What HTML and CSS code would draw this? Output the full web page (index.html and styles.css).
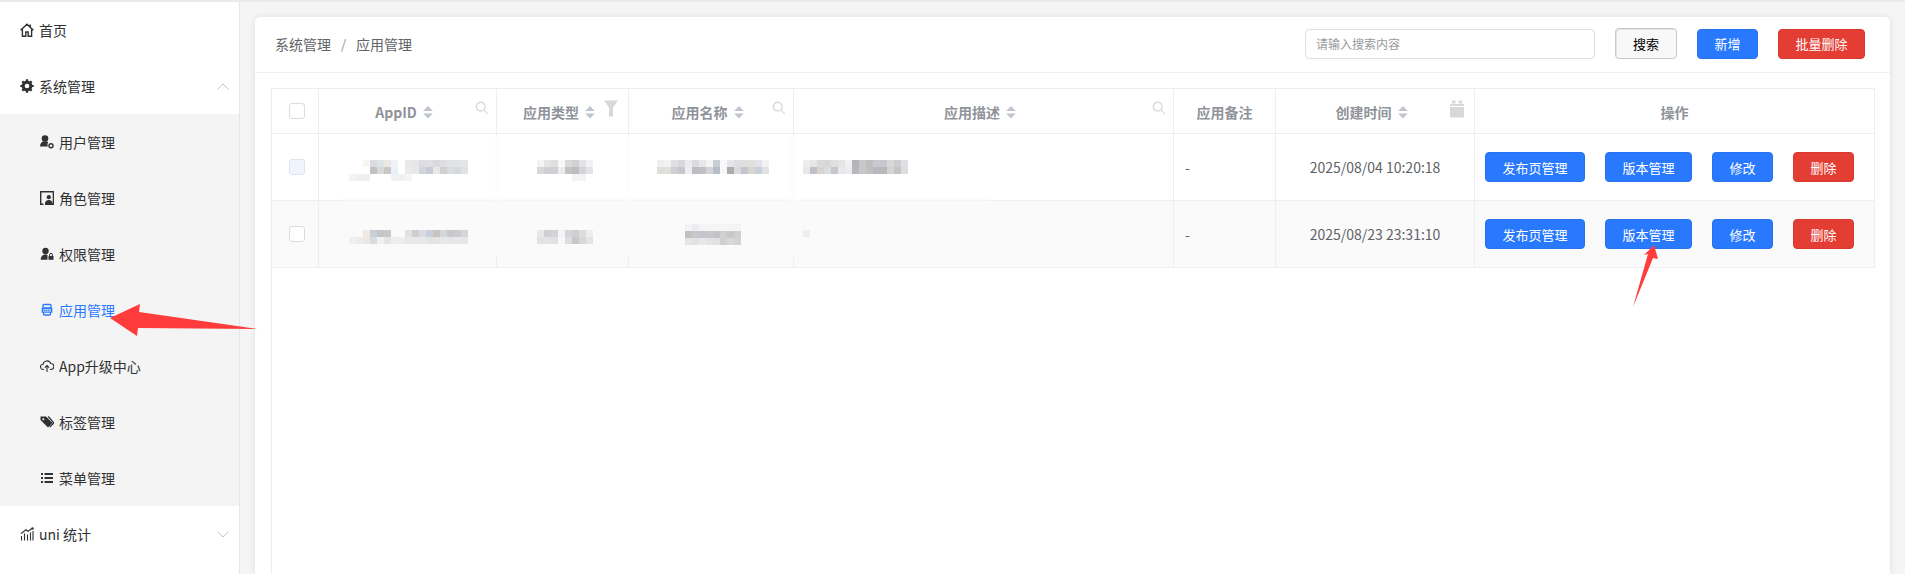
FILE: index.html
```html
<!DOCTYPE html>
<html lang="zh-CN">
<head>
<meta charset="utf-8">
<title>应用管理</title>
<link rel="stylesheet" href="styles.css">
</head>
<body>
<svg class="defs" aria-hidden="true">
  <symbol id="i-sort" viewBox="0 0 9 12"><path d="M4.500 0 9 4.500H0z"/><path d="M0 7h9L4.500 11.500z"/></symbol>
  <symbol id="i-search" viewBox="0 0 16 16"><circle cx="6.500" cy="6.500" r="5" fill="none" stroke="currentColor" stroke-width="1.600"/><path d="M10.300 10.300 15 15" stroke="currentColor" stroke-width="1.200" fill="none"/></symbol>
</svg>
<div class="app">
  <nav class="side">
    <a class="item">
      <svg class="ic" viewBox="0 0 14 14"><path d="M.6 7.300 7 1.200l6.400 6.100M2.400 6v7.200h3.400V9h2.400v4.200h3.400V6M10.300 1.500v2.600" fill="none" stroke="#303133" stroke-width="1.400"/></svg>
      <span>首页</span>
    </a>
    <a class="item">
      <svg class="ic" viewBox="0 0 14 14"><circle cx="7" cy="7" r="3.900" fill="none" stroke="#303133" stroke-width="3"/><path d="M7 .3v13.400M.3 7h13.400M2.300 2.300l9.400 9.400M11.700 2.300l-9.400 9.400" stroke="#303133" stroke-width="2.200"/><circle cx="7" cy="7" r="2.300" fill="#fff"/></svg>
      <span class="grow">系统管理</span>
      <svg class="chev" viewBox="0 0 12 7"><path d="M.5 6.500 6 1l5.500 5.500" fill="none" stroke="#c0c4cc" stroke-width="1"/></svg>
    </a>
    <div class="sub">
      <a class="item">
        <svg class="ic" viewBox="0 0 14 14"><circle cx="5" cy="3.500" r="3.300" fill="#303133"/><path d="M0 11.500c0-3.500 2-5.200 5-5.200 1.500 0 2.500.4 3.200 1-.9 1.100-.9 2.900-.2 4.200z" fill="#303133"/><circle cx="11" cy="10.700" r="2" fill="none" stroke="#303133" stroke-width="1.400"/></svg>
        <span>用户管理</span>
      </a>
      <a class="item">
        <svg class="ic" viewBox="0 0 14 14"><path d="M13.400 5V.7H.7v12.600h2.700" fill="none" stroke="#303133" stroke-width="1.400"/><path d="M13.400 5v8.300H5" fill="none" stroke="#303133" stroke-width="1.400"/><circle cx="8.800" cy="6.200" r="2.100" fill="#303133"/><path d="M5 13c0-3 1.500-4 3.800-4s3.800 1 3.800 4z" fill="#303133"/></svg>
        <span>角色管理</span>
      </a>
      <a class="item">
        <svg class="ic" viewBox="0 0 14 14"><circle cx="5.500" cy="4" r="3.200" fill="#303133"/><path d="M.7 12.800c0-3.300 2-5.300 4.800-5.300.8 0 1.400.1 2 .4v4.900z" fill="#303133"/><path d="M8.500 9h5v3.800h-5z" fill="#303133"/><path d="M9.600 9V7.800a1.400 1.400 0 0 1 2.800 0V9" fill="none" stroke="#303133"/></svg>
        <span>权限管理</span>
      </a>
      <a class="item active">
        <svg class="ic" viewBox="0 0 14 14"><path d="M4 1.500h6a1 1 0 0 1 1 1V5H3V2.500a1 1 0 0 1 1-1zM2.300 5.500h9.400v3.700H2.300zM3.500 9.200v1.800a1 1 0 0 0 1 1h5a1 1 0 0 0 1-1V9.200" fill="none" stroke="#2979ff" stroke-width="1.300"/><path d="M3.500 7.300h7" stroke="#2979ff" stroke-width="1.300" stroke-dasharray="1.500 .6"/></svg>
        <span>应用管理</span>
      </a>
      <a class="item">
        <svg class="ic" viewBox="0 0 14 14"><path d="M4 10.500H3.200A2.600 2.600 0 0 1 3 5.300 4 4 0 0 1 10.700 4.500 3 3 0 0 1 11 10.500h-1" fill="none" stroke="#303133" stroke-width="1.100"/><path d="M7 13V6.500M4.800 8.700 7 6.500l2.200 2.200" fill="none" stroke="#303133" stroke-width="1.100"/></svg>
        <span>App升级中心</span>
      </a>
      <a class="item">
        <svg class="ic" viewBox="0 0 14 14"><path d="M.5 1.500h5.500l6.500 6.500-4.500 4.500-7.500-7.500z" fill="#303133"/><circle cx="3.300" cy="4.300" r="1" fill="#f4f4f4"/><path d="m8.300 1.500 5.500 6.500-4 4" stroke="#303133" stroke-width="1.200" fill="none"/></svg>
        <span>标签管理</span>
      </a>
      <a class="item">
        <svg class="ic" viewBox="0 0 14 14"><path d="M1 3h2M1 7h2M1 11h2" stroke="#303133" stroke-width="2"/><path d="M4.500 3H13M4.500 7H13M4.500 11H13" stroke="#303133" stroke-width="2"/></svg>
        <span>菜单管理</span>
      </a>
    </div>
    <a class="item">
      <svg class="ic" viewBox="0 0 14 14"><path d="M1 6.500 6 2.800 8 4.300 12 1.500" fill="none" stroke="#303133" stroke-width="1.100"/><circle cx="12.500" cy="1.500" r="1.200" fill="#303133"/><path d="M1.500 13.500V9M4.500 13.500V6.500M7.500 13.500V7.500M10.500 13.500V5.500M13 13.500V4" fill="none" stroke="#303133" stroke-width="1.100"/></svg>
      <span class="grow">uni 统计</span>
      <svg class="chev" viewBox="0 0 12 7"><path d="M.5.500 6 6l5.500-5.500" fill="none" stroke="#c0c4cc" stroke-width="1"/></svg>
    </a>
  </nav>
  <main class="main">
    <section class="card">
      <header class="bar">
        <div class="crumb"><span>系统管理</span><i>/</i><span>应用管理</span></div>
        <div class="tools">
          <input class="search" type="text" placeholder="请输入搜索内容">
          <button class="btn plain">搜索</button>
          <button class="btn primary">新增</button>
          <button class="btn danger">批量删除</button>
        </div>
      </header>
      <div class="body">
        <div class="wrap">
        <table class="tbl">
          <colgroup>
            <col class="c1"><col class="c2"><col class="c3"><col class="c4"><col class="c5"><col class="c6"><col class="c7"><col class="c8">
          </colgroup>
          <thead>
            <tr>
              <th class="chk"><span class="box"></span></th>
              <th><span class="th">AppID<svg class="sort"><use href="#i-sort"/></svg></span><svg class="flt mag"><use href="#i-search"/></svg></th>
              <th><span class="th">应用类型<svg class="sort"><use href="#i-sort"/></svg></span><svg class="flt funnel" viewBox="0 0 14 16"><path d="M0 0h14L9 7v9H5V7z"/></svg></th>
              <th><span class="th">应用名称<svg class="sort"><use href="#i-sort"/></svg></span><svg class="flt mag"><use href="#i-search"/></svg></th>
              <th><span class="th">应用描述<svg class="sort"><use href="#i-sort"/></svg></span><svg class="flt mag"><use href="#i-search"/></svg></th>
              <th><span class="th nosort">应用备注</span></th>
              <th><span class="th">创建时间<svg class="sort"><use href="#i-sort"/></svg></span><svg class="flt cal" viewBox="0 0 14 17"><path d="M2 0h3.500v3H2zM8.500 0H12v3H8.500zM0 3.500h14v2H0zM0 6.500h14V16a1 1 0 0 1-1 1H1a1 1 0 0 1-1-1z"/></svg></th>
              <th><span class="th nosort">操作</span></th>
            </tr>
          </thead>
          <tbody>
            <tr>
              <td class="chk"><span class="box off"></span></td>
              <td></td><td></td><td></td><td></td>
              <td>-</td>
              <td class="ctr">2025/08/04 10:20:18</td>
              <td><div class="ops"><button class="btn primary">发布页管理</button><button class="btn primary">版本管理</button><button class="btn primary">修改</button><button class="btn danger">删除</button></div></td>
            </tr>
            <tr class="alt">
              <td class="chk"><span class="box"></span></td>
              <td></td><td></td><td></td><td></td>
              <td>-</td>
              <td class="ctr">2025/08/23 23:31:10</td>
              <td><div class="ops"><button class="btn primary">发布页管理</button><button class="btn primary">版本管理</button><button class="btn primary">修改</button><button class="btn danger">删除</button></div></td>
            </tr>
          </tbody>
        </table>
        </div>
      </div>
    </section>
  </main>
</div>
<svg class="over" viewBox="0 0 1905 574" aria-hidden="true">
  <path fill="#fcfcfd" d="M342 198h647v2.500H342z"/>
  <path fill="#fcfdfe" d="M495 136h3v64h-3zM627 136h3v64h-3zM790 136h6v64h-6z"/>
  <path fill="#fafafb" d="M495 200h3v57h-3zM627 200h3v57h-3zM790 200h6v57h-6z"/>
  <g class="m">
    <rect x="363" y="160" fill="#f9f5f0"/><rect x="370" y="160" fill="#d9dbdf"/><rect x="377" y="160" fill="#e0e3e6"/><rect x="384" y="160" fill="#ece7e2"/><rect x="391" y="160" fill="#eef3fa"/><rect x="405" y="160" fill="#e9e7e8"/><rect x="412" y="160" fill="#e6e6e8"/><rect x="419" y="160" fill="#dcdde2"/><rect x="426" y="160" fill="#dfdfe4"/><rect x="433" y="160" fill="#d9d9dd"/><rect x="440" y="160" fill="#dedfe3"/><rect x="447" y="160" fill="#e1e3e7"/><rect x="454" y="160" fill="#e2e3e7"/><rect x="461" y="160" fill="#e4e5e8"/>
    <rect x="370" y="167" fill="#c2c1c3"/><rect x="377" y="167" fill="#d8dad9"/><rect x="384" y="167" fill="#c9c8c6"/><rect x="391" y="167" fill="#e8f0fa"/><rect x="405" y="167" fill="#ecebeb"/><rect x="412" y="167" fill="#e9e9ea"/><rect x="419" y="167" fill="#d3d5dc"/><rect x="426" y="167" fill="#c7cbd5"/><rect x="433" y="167" fill="#e8e8e8"/><rect x="440" y="167" fill="#d4cfcf"/><rect x="447" y="167" fill="#dcdcde"/><rect x="454" y="167" fill="#d6d9df"/><rect x="461" y="167" fill="#e0e2e6"/>
    <rect x="349" y="174" fill="#f3f3f4"/><rect x="356" y="174" fill="#f0f0f2"/><rect x="363" y="174" fill="#f0f0f2"/><rect x="391" y="174" fill="#f1f1f3"/><rect x="398" y="174" fill="#f1f1f3"/><rect x="405" y="174" fill="#f5f5f7"/>

    <rect x="363" y="230" fill="#f3e8e0"/><rect x="370" y="230" fill="#c6d0dc"/><rect x="377" y="230" fill="#c5c5c8"/><rect x="384" y="230" fill="#c8c8ca"/><rect x="405" y="230" fill="#e3e0df"/><rect x="412" y="230" fill="#cfcdce"/><rect x="419" y="230" fill="#dbdbdd"/><rect x="426" y="230" fill="#c9d0dd"/><rect x="433" y="230" fill="#c8c3bd"/><rect x="440" y="230" fill="#d3d6da"/><rect x="447" y="230" fill="#c9c9cd"/><rect x="454" y="230" fill="#cdcdd1"/><rect x="461" y="230" fill="#d5d6d9"/>
    <rect x="349" y="237" fill="#f0f0f0"/><rect x="356" y="237" fill="#ededed"/><rect x="363" y="237" fill="#e8e8e8"/><rect x="370" y="237" fill="#d8dbe0"/><rect x="377" y="237" fill="#f0f0f0"/><rect x="384" y="237" fill="#e4e4e4"/><rect x="391" y="237" fill="#eeeeee"/><rect x="398" y="237" fill="#ededed"/><rect x="405" y="237" fill="#e8e8ea"/><rect x="412" y="237" fill="#e9e9e9"/><rect x="419" y="237" fill="#e8e8ea"/><rect x="426" y="237" fill="#e2e4e8"/><rect x="433" y="237" fill="#e6e3df"/><rect x="440" y="237" fill="#e6e8ea"/><rect x="447" y="237" fill="#e6e6e8"/><rect x="454" y="237" fill="#e8e8e8"/><rect x="461" y="237" fill="#e6e6e6"/>

    <rect x="537" y="160" fill="#f3f3f3"/><rect x="544" y="160" fill="#e4e4e4"/><rect x="551" y="160" fill="#dfdfe2"/><rect x="558" y="160" fill="#f8f8f8"/><rect x="565" y="160" fill="#dad9da"/><rect x="572" y="160" fill="#d4d1d2"/><rect x="579" y="160" fill="#e3e3e5"/><rect x="586" y="160" fill="#f2f2f5"/>
    <rect x="537" y="167" fill="#d8d8d8"/><rect x="544" y="167" fill="#cfcfd3"/><rect x="551" y="167" fill="#cfd0d6"/><rect x="558" y="167" fill="#ececec"/><rect x="565" y="167" fill="#c4c2c3"/><rect x="572" y="167" fill="#bfbcbd"/><rect x="579" y="167" fill="#d4d4d6"/><rect x="586" y="167" fill="#e4e4e8"/>
    <rect x="572" y="174" fill="#f3f3f3"/><rect x="579" y="174" fill="#f3f3f3"/>
    <rect x="537" y="230" fill="#e8e8e8"/><rect x="544" y="230" fill="#d0d0d4"/><rect x="551" y="230" fill="#d4d4d8"/><rect x="558" y="230" fill="#f4f4f4"/><rect x="565" y="230" fill="#d6d6da"/><rect x="572" y="230" fill="#cfcfd3"/><rect x="579" y="230" fill="#dddddd"/><rect x="586" y="230" fill="#eeeeee"/>
    <rect x="537" y="237" fill="#e2e2e2"/><rect x="544" y="237" fill="#e4e4e4"/><rect x="551" y="237" fill="#e0e0e0"/><rect x="558" y="237" fill="#f8f8f5"/><rect x="565" y="237" fill="#dddde2"/><rect x="572" y="237" fill="#c8c8c8"/><rect x="579" y="237" fill="#d8d8d8"/><rect x="586" y="237" fill="#e4e4e4"/>

    <rect x="657" y="160" fill="#eeeeee"/><rect x="664" y="160" fill="#f2f2f2"/><rect x="671" y="160" fill="#e0e0e4"/><rect x="678" y="160" fill="#d8d8da"/><rect x="685" y="160" fill="#e8ecf0"/><rect x="692" y="160" fill="#dcdcde"/><rect x="699" y="160" fill="#e8e8e8"/><rect x="706" y="160" fill="#f4f4f4"/><rect x="713" y="160" fill="#c8ccd4"/><rect x="720" y="160" fill="#f8f8f8"/><rect x="727" y="160" fill="#e6e6ea"/><rect x="734" y="160" fill="#dcdee2"/><rect x="741" y="160" fill="#dfdfdf"/><rect x="748" y="160" fill="#e2e0dc"/><rect x="755" y="160" fill="#e0e3e8"/><rect x="762" y="160" fill="#f2f2f2"/>
    <rect x="657" y="167" fill="#dedede"/><rect x="664" y="167" fill="#e0dfd8"/><rect x="671" y="167" fill="#ccd0d6"/><rect x="678" y="167" fill="#c8c8cc"/><rect x="685" y="167" fill="#eceef2"/><rect x="692" y="167" fill="#bdbdc0"/><rect x="699" y="167" fill="#c0c0c4"/><rect x="706" y="167" fill="#d4d4d4"/><rect x="713" y="167" fill="#b8bfca"/><rect x="720" y="167" fill="#f8f8f8"/><rect x="727" y="167" fill="#adadb0"/><rect x="734" y="167" fill="#d8dadf"/><rect x="741" y="167" fill="#c4c6cc"/><rect x="748" y="167" fill="#d8d6cf"/><rect x="755" y="167" fill="#c8d0dc"/><rect x="762" y="167" fill="#e2e2e6"/>
    <rect x="685" y="224" fill="#f4f4f4"/><rect x="692" y="224" fill="#ebeef0"/><rect x="699" y="224" fill="#f4f4f4"/><rect x="706" y="224" fill="#f5f5f5"/><rect x="713" y="224" fill="#f5f5f5"/><rect x="720" y="224" fill="#f5f5f5"/><rect x="727" y="224" fill="#f4f4f4"/><rect x="734" y="224" fill="#f4f4f4"/>
    <rect x="685" y="231" fill="#c4c0c0"/><rect x="692" y="231" fill="#c8c8cc"/><rect x="699" y="231" fill="#c4c4ca"/><rect x="706" y="231" fill="#c8c8cc"/><rect x="713" y="231" fill="#c4c4c8"/><rect x="720" y="231" fill="#d0d0d0"/><rect x="727" y="231" fill="#c8c8c8"/><rect x="734" y="231" fill="#d0d0d0"/>
    <rect x="685" y="238" fill="#e6e6e6"/><rect x="692" y="238" fill="#e0e2e6"/><rect x="699" y="238" fill="#e8e8e8"/><rect x="706" y="238" fill="#e4e4e4"/><rect x="713" y="238" fill="#e0e0e0"/><rect x="720" y="238" fill="#d0d0d4"/><rect x="727" y="238" fill="#d8d8d8"/><rect x="734" y="238" fill="#d4d4d4"/>

    <rect x="803" y="160" fill="#eeeeee"/><rect x="810" y="160" fill="#e6e6e6"/><rect x="817" y="160" fill="#dadadc"/><rect x="824" y="160" fill="#d8d8d8"/><rect x="831" y="160" fill="#e0e0e0"/><rect x="838" y="160" fill="#e4e4e4"/><rect x="845" y="160" fill="#f0f0f0"/><rect x="852" y="160" fill="#b4b4b8"/><rect x="859" y="160" fill="#c8c8cc"/><rect x="866" y="160" fill="#bebec0"/><rect x="873" y="160" fill="#c8c8d0"/><rect x="880" y="160" fill="#c8c8cc"/><rect x="887" y="160" fill="#d8d8d8"/><rect x="894" y="160" fill="#cdcdcd"/><rect x="901" y="160" fill="#dfdfe4"/>
    <rect x="803" y="167" fill="#e8e8e8"/><rect x="810" y="167" fill="#c0c0c8"/><rect x="817" y="167" fill="#d8d4d0"/><rect x="824" y="167" fill="#d8dee4"/><rect x="831" y="167" fill="#c8c8cc"/><rect x="838" y="167" fill="#e8e8ea"/><rect x="845" y="167" fill="#ececf0"/><rect x="852" y="167" fill="#b8b8bc"/><rect x="859" y="167" fill="#c8c8cc"/><rect x="866" y="167" fill="#c4c0c0"/><rect x="873" y="167" fill="#b8b8c0"/><rect x="880" y="167" fill="#b8b8bc"/><rect x="887" y="167" fill="#d4d4d4"/><rect x="894" y="167" fill="#c4c4c4"/><rect x="901" y="167" fill="#dcdee2"/>
    <rect x="803" y="230" fill="#eeeeee"/>
  </g>
  <path class="arrow" d="M110 318 140 304 139 312 257 329 138 328 137 336z"/>
  <path class="arrow" d="M1654 245 1644 255 1648 254 1633 307 1653 258 1658 259z"/>
</svg>
</body>
</html>
```

FILE: styles.css
```css
* { box-sizing: border-box; }
html, body { margin: 0; height: 100%; overflow: hidden; }
body {
  position: relative;
  background: #f5f5f5;
  font-family: "Noto Sans CJK SC", "Noto Sans", sans-serif;
  font-size: 14px;
  color: #303133;
}
.defs { display: none; }

.app { display: flex; height: 574px; border-top: 2px solid #eaeaea; }

.side {
  flex: 0 0 240px;
  background: #fff;
  border-right: 1px solid #e6e6e6;
}
.item {
  display: flex;
  align-items: center;
  height: 56px;
  padding: 0 20px;
  gap: 5px;
  color: #303133;
}
.ic { width: 14px; height: 14px; flex: none; }
.grow { flex: 1; }
.chev { width: 12px; height: 7px; margin-right: -10px; }
.sub { background: #f4f4f4; }
.sub .item { padding-left: 40px; gap: 5px; }
.sub .active { color: #2979ff; }

.main { flex: 1; padding: 15px 15px 0; min-width: 0; }
.card {
  height: 100%;
  background: #fff;
  border-radius: 5px 5px 0 0;
  box-shadow: 0 0 6px rgba(0, 0, 0, .1);
}
.bar {
  display: flex;
  align-items: center;
  justify-content: space-between;
  height: 56px;
  padding: 0 25px 2px 20px;
  border-bottom: 1px solid #f0f0f0;
}
.crumb { color: #606266; display: flex; align-items: center; }
.crumb i { font-style: normal; margin: 0 10px; color: #909399; font-size: 13px; }
.tools { display: flex; align-items: center; gap: 20px; }
.search {
  width: 290px;
  height: 30px;
  padding: 0 10px;
  border: 1px solid #dcdfe6;
  border-radius: 4px;
  font: 12px "Noto Sans CJK SC", sans-serif;
  outline: none;
}
.search::placeholder { color: #999; }

.btn {
  height: 30px;
  padding: 0 16.5px;
  border: 1px solid transparent;
  border-radius: 4px;
  font: 13px/1 "Noto Sans CJK SC", sans-serif;
  white-space: nowrap;
}
.primary { background: #2979ff; border-color: #2773ef; color: #fff; }
.danger { background: #e43d33; border-color: #d93a30; color: #fff; }
.plain { background: #f8f8f8; border: 1px solid #c8c8c8; box-shadow: inset 1px 1px 0 #e4e4e4; color: #000; height: 31px; padding: 0 17px; }

.body { padding: 15px 16px 0; }
.wrap { height: 486px; border-left: 1px solid #ebeef5; }
.tbl { width: 1603px; margin-left: -1px; table-layout: fixed; border-collapse: collapse; }
.c1 { width: 47px; } .c2 { width: 178px; } .c3 { width: 132px; } .c4 { width: 165px; }
.c5 { width: 380px; } .c6 { width: 102px; } .c7 { width: 199px; } .c8 { width: 400px; }
.tbl th, .tbl td { border: 1px solid #ebeef5; }
.tbl th {
  position: relative;
  height: 45px;
  padding: 2px 0 0;
  font-weight: 700;
  font-size: 14px;
  color: #909399;
  text-align: center;
}
.th { display: inline-flex; align-items: center; gap: 6px; padding-right: 7px; }
.th.nosort { padding-right: 0; }
.sort { width: 10px; height: 13px; fill: #c0c4cc; }
.flt { position: absolute; top: 12px; right: 8px; width: 14px; height: 14px; color: #d8d8d8; fill: #d8d8d8; }
.mag { fill: none; right: 7px; }
.funnel { right: 10px; height: 17px; top: 11px; }
.cal { right: 10px; height: 18px; top: 11px; }
.tbl td {
  height: 67px;
  padding: 0 11px;
  color: #606266;
  white-space: nowrap;
}
.tbl td.ctr { text-align: center; }
.alt td { background: #fafafa; }
.tbl .chk { padding: 0 0 0 17px; text-align: left; }
.box {
  display: block;
  width: 16px;
  height: 16px;
  background: #fff;
  border: 1px solid #dcdcdc;
  border-radius: 3px;
}
.box.off { background: #f0f4fc; border-color: #dfe3ee; }
.ops { display: flex; gap: 20px; margin-left: -1px; }

.over { position: absolute; top: 0; left: 0; width: 1905px; height: 574px; pointer-events: none; }
.m { filter: blur(.6px); }
.m rect { width: 7px; height: 7px; }
.arrow { fill: #ff3b3b; }
```
